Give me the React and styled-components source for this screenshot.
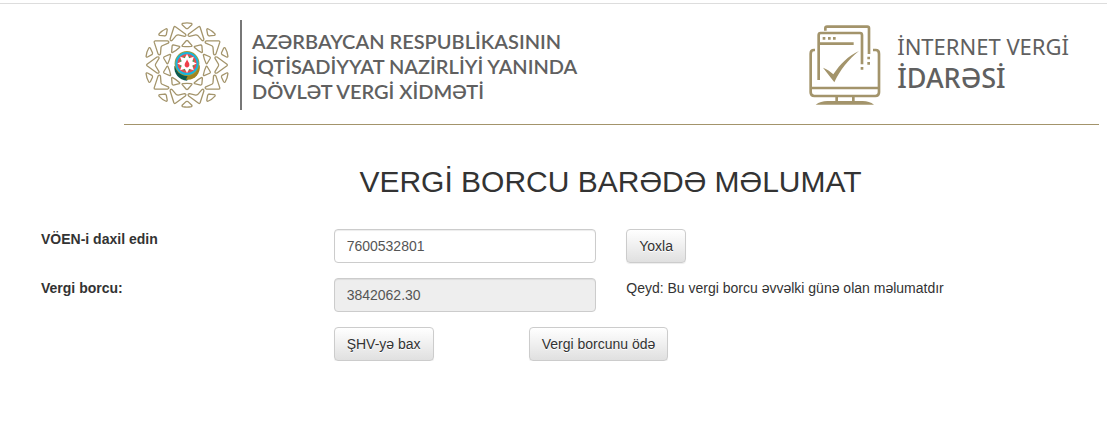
import React, { useState } from "react";
import styled, { createGlobalStyle } from "styled-components";

const GlobalStyle = createGlobalStyle`
  *, *::before, *::after { box-sizing: border-box; }
  body {
    margin: 0;
    background: #fff;
    color: #333;
    font-family: "Liberation Sans", Arial, sans-serif;
    font-size: 14px;
    line-height: 20px;
  }
`;

const Page = styled.div`
  border-top: 1px solid #ddd;
  margin-top: 3px;
`;

const Header = styled.header`
  display: flex;
  justify-content: space-between;
  align-items: flex-start;
  margin: 0 8px 0 124px;
  padding: 16px 30px 14px 20px;
  border-bottom: 1px solid #a3946b;
`;

const Brand = styled.div`
  display: flex;
  align-items: center;
  height: 90px;
  color: #606060;
`;

const BrandName = styled.div`
  margin-left: 10px;
  padding: 2px 0 0 10px;
  border-left: 2px solid #777;
  height: 90px;
  display: flex;
  flex-direction: column;
  justify-content: center;
  font: 600 20px/25px Lato, sans-serif;
  white-space: nowrap;
`;

const Service = styled.div`
  margin-left: 16px;
  padding-bottom: 6px;
  font-family: "Noto Sans", "Open Sans", sans-serif;
  white-space: nowrap;
`;

const ServiceLine = styled.div`
  font-size: ${(p) => (p.$large ? "27px" : "22px")};
  font-weight: ${(p) => (p.$large ? 500 : 400)};
  line-height: 32px;
`;

const Title = styled.h2`
  margin: 36px 8px 26px 122px;
  font-size: 30px;
  font-weight: 400;
  line-height: 42px;
  text-align: center;
`;

const Form = styled.form`
  display: grid;
  gap: 15px;
  padding: 0 8px 0 41px;
`;

const Row = styled.div`
  display: grid;
  grid-template-columns: 5fr 5fr 9fr;
  column-gap: 30px;
  align-items: start;
`;

const Label = styled.label`
  font-weight: 700;
`;

const Field = styled.input`
  width: 100%;
  height: 34px;
  padding: 6px 12px;
  border: 1px solid #ccc;
  border-radius: 4px;
  background: #fff;
  box-shadow: inset 0 1px 1px rgba(0, 0, 0, 0.075);
  color: #555;
  font: inherit;
  outline: none;

  &:read-only {
    background: #eee;
  }
`;

const Button = styled.button`
  justify-self: start;
  height: 34px;
  padding: 6px 12px;
  border: 1px solid #ccc;
  border-radius: 4px;
  background: linear-gradient(#fff, #e0e0e0);
  box-shadow: inset 0 1px 0 rgba(255, 255, 255, 0.15), 0 1px 1px rgba(0, 0, 0, 0.075);
  color: #333;
  font: inherit;
  text-shadow: 0 1px 0 #fff;
  white-space: nowrap;
  cursor: pointer;
`;

const Actions = styled.div`
  grid-column: 2 / -1;
  display: grid;
  grid-template-columns: 165px auto;
  column-gap: 30px;
`;

const Note = styled.p`
  margin: 0;
`;

const steps = Array.from({ length: 10 }, (_, i) => i * 36);
const rays = Array.from({ length: 8 }, (_, i) => i * 45);

function Emblem() {
  return (
    <svg width="86" height="86" viewBox="-43 -43 86 86" aria-hidden="true">
      <g fill="none" stroke="#a3946b" strokeWidth="1.3" strokeLinejoin="round">
        {steps.map((a) => (
          <g key={a} transform={`rotate(${a})`}>
            <path d="M-4.4 -41.6Q0 -42.6 4.4 -41.6Q5.4 -41 4.6 -40L1 -36.6Q0 -36 -1 -36.6L-4.6 -40Q-5.4 -41 -4.4 -41.6Z" />
            <path d="M-.8 -24.2Q0 -24.8 .8 -24.2L4.8 -19.6Q5.2 -18.8 4.2 -18.6Q0 -18 -4.2 -18.6Q-5.2 -18.8 -4.8 -19.6Z" />
          </g>
        ))}
        {steps.map((a) => (
          <path
            key={a}
            transform={`rotate(${a + 18})`}
            d="M-.8 -40Q0 -40.8 .8 -40L8 -30Q8.8 -27.6 6.6 -28L1 -31.4Q0 -31.8 -1 -31.4L-6.6 -28Q-8.8 -27.6 -8 -30Z"
          />
        ))}
      </g>
      <path d="M-12.6 1C-13.5 8 -8 15.5 0 15.8L4 9Z" fill="#0c5a4e" />
      <path d="M12.8 0C13.8 9 7 16 -1 14.5L1 10Z" fill="#a08520" />
      <circle r="12.4" cy="-1.5" fill="#a89a35" />
      <circle r="11.6" cy="-1.5" fill="#18b5dc" />
      <circle r="9.6" cy="-1.5" fill="#ee4b50" />
      <g transform="translate(0 -1.5)">
        {rays.map((a) => (
          <path key={a} transform={`rotate(${a + 22.5})`} d="M0 -8.4L1.8 -5L-1.8 -5Z" fill="#45a05a" />
        ))}
        {rays.map((a) => (
          <path key={a} transform={`rotate(${a})`} d="M0 -9.6L2.6 -4.5L0 0L-2.6 -4.5Z" fill="#fff" />
        ))}
        <circle r="5" fill="#fff" />
        <path d="M0 -4.2C.4 -2.5 2.6 -.8 2.4 1.6C2.3 3.3 1.2 4 0 4C-1.2 4 -2.3 3.3 -2.4 1.6C-2.5 -.8 -.2 -2 0 -4.2Z" fill="#ef4048" />
      </g>
    </svg>
  );
}

function MonitorIcon() {
  return (
    <svg width="72" height="82" viewBox="27 27 216 246" fill="none" stroke="#a3946b" strokeWidth="8" aria-hidden="true">
      <path d="M76 47V40Q76 35 81 35H202Q207 35 207 40V117" />
      <path d="M56 195V60Q56 54 62 54H180Q186 54 186 60V148" />
      <path d="M60 86H161" />
      <path d="M45 105H42Q32 105 32 116V232Q32 243 43 243H226Q237 243 237 232V116Q237 105 227 105H219" />
      <path d="M32 219H237" />
      <path d="M110 244V260M160 244V260" />
      <g fill="#a3946b" stroke="none">
        <path d="M68 66h8v8h-8zM84 66h8v8h-8zM99 66h8v8h-8zM202 125h8v8h-8zM202 141h8v8h-8zM182 156h8v8h-8z" />
        <path d="M69 158C80 162 92 170 100 178C120 148 145 122 177 108C145 134 120 165 103 202Z" />
        <path d="M47 269Q62 258 82 258H188Q208 258 222 269Z" />
      </g>
    </svg>
  );
}

export default function App() {
  const [voen, setVoen] = useState("7600532801");
  return (
    <>
      <GlobalStyle />
      <Page>
        <Header>
          <Brand>
            <Emblem />
            <BrandName>
              <div>AZƏRBAYCAN RESPUBLİKASININ</div>
              <div>İQTİSADİYYAT NAZİRLİYİ YANINDA</div>
              <div>DÖVLƏT VERGİ XİDMƏTİ</div>
            </BrandName>
          </Brand>
          <Brand>
            <MonitorIcon />
            <Service>
              <ServiceLine>İNTERNET VERGİ</ServiceLine>
              <ServiceLine $large>İDARƏSİ</ServiceLine>
            </Service>
          </Brand>
        </Header>
        <main>
          <Title>VERGİ BORCU BARƏDƏ MƏLUMAT</Title>
          <Form onSubmit={(e) => e.preventDefault()}>
            <Row>
              <Label htmlFor="voen">VÖEN-i daxil edin</Label>
              <Field id="voen" type="text" value={voen} onChange={(e) => setVoen(e.target.value)} />
              <Button type="submit">Yoxla</Button>
            </Row>
            <Row>
              <Label htmlFor="debt">Vergi borcu:</Label>
              <Field id="debt" type="text" value="3842062.30" readOnly />
              <Note>Qeyd: Bu vergi borcu əvvəlki günə olan məlumatdır</Note>
            </Row>
            <Row>
              <Actions>
                <Button type="button">ŞHV-yə bax</Button>
                <Button type="button">Vergi borcunu ödə</Button>
              </Actions>
            </Row>
          </Form>
        </main>
      </Page>
    </>
  );
}
